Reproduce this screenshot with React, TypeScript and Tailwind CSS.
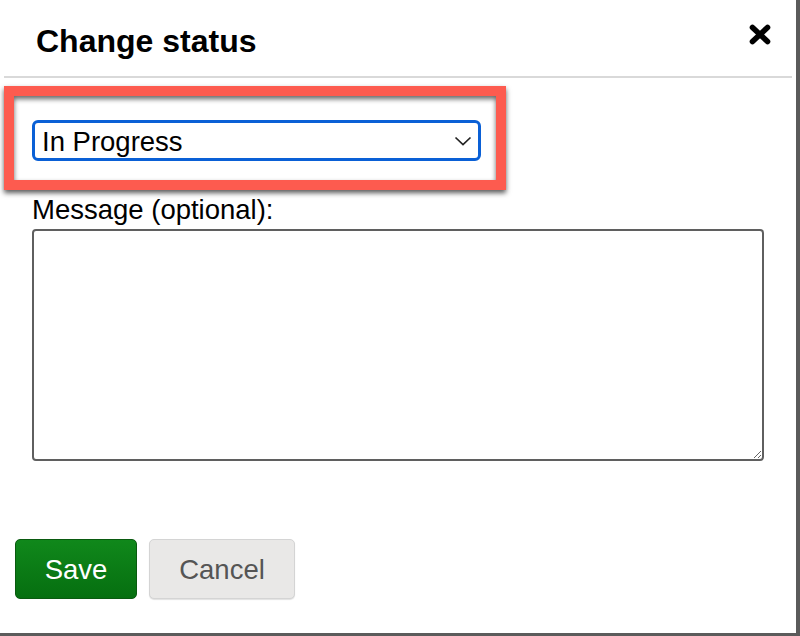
import React from "react";

export default function App() {
  const font = { fontFamily: '"Liberation Sans", Arial, Helvetica, sans-serif' };
  return (
    <div className="w-[800px] h-[636px] bg-[#5b5b5b] overflow-hidden" style={font}>
      <div className="w-[796px] h-[633px] bg-white flex flex-col">
        {/* Header */}
        <div className="mx-[4px] pt-[25px] pb-[19px] border-b-2 border-[#d9d9d9] flex items-start justify-between">
          <h2 className="pl-[32px] text-[32px] leading-none font-bold text-black">Change status</h2>
          <button className="mr-[21px] -mt-[1px]" aria-label="Close">
            <svg width="22" height="21" viewBox="0 0 22 21">
              <path d="M3.5 3.5 L18.5 17.5 M18.5 3.5 L3.5 17.5" stroke="#000" strokeWidth="5.6" strokeLinecap="round" fill="none" />
            </svg>
          </button>
        </div>

        {/* Body */}
        <div className="pl-[32px] pt-[42px] flex flex-col">
          <div className="relative w-[449px]">
            <div className="h-[41px] border-[3px] border-[#0a60d6] rounded-[6px] flex items-center justify-between pl-[7px] pr-[6px]">
              <span className="mt-[3px] text-[27.5px] leading-none text-black">In Progress</span>
              <svg width="18" height="10" viewBox="0 0 18 10" className="mt-[1px]">
                <path d="M1.5 1.5 L9 8.5 L16.5 1.5" stroke="#222" strokeWidth="1.7" fill="none" />
              </svg>
            </div>
            {/* annotation box */}
            <div className="absolute left-[-28px] top-[-34px] w-[502px] h-[104px] border-[10px] border-[#fd5b4f] pointer-events-none shadow-[0_3px_5px_rgba(0,0,0,0.65),inset_0_3px_5px_rgba(0,0,0,0.6)]" />
          </div>

          <label className="mt-[35px] text-[27.5px] leading-none text-black">Message (optional):</label>
          <textarea className="mt-[5px] w-[732px] h-[232px] border-2 border-[#5f5f5f] rounded-[4px] bg-white outline-none" />
        </div>

        {/* Buttons */}
        <div className="pl-[15px] mt-[78px] flex gap-[12px]">
          <button className="w-[122px] h-[60px] pt-[2px] rounded-[5px] border border-[#0a5a10] bg-linear-to-b from-[#10881b] to-[#066f10] text-white text-[27.5px] leading-none">
            Save
          </button>
          <button className="w-[146px] h-[60px] pt-[2px] rounded-[5px] border-[1.5px] border-[#d4d4d4] bg-[#e9e8e7] text-[#555] text-[27.5px] leading-none shadow-[0_1px_1px_rgba(0,0,0,0.12)]">
            Cancel
          </button>
        </div>
      </div>
    </div>
  );
}
